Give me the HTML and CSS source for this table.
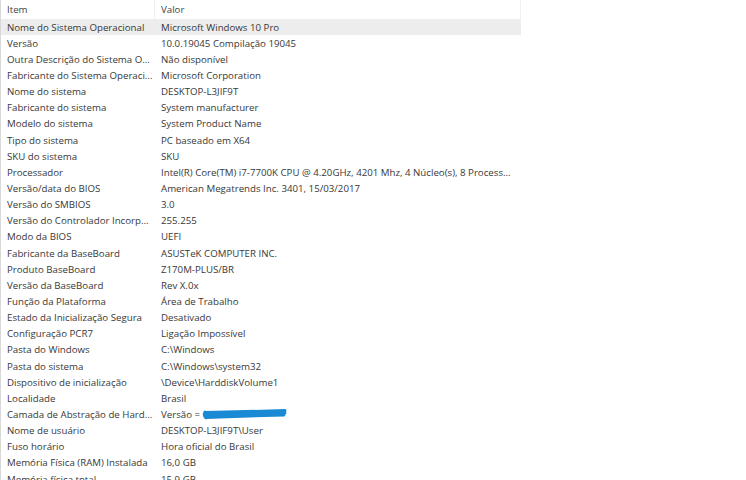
FILE: index.html
```html
<!DOCTYPE html>
<html lang="pt-BR">
<head>
<meta charset="utf-8">
<link rel="stylesheet" href="styles.css">
</head>
<body>
<div class="list">
  <div class="head">
    <div class="hcell">Item</div>
    <div class="hcell">Valor</div>
  </div>
  <div class="row sel"><span>Nome do Sistema Operacional</span><span>Microsoft Windows 10 Pro</span></div>
  <div class="row"><span>Versão</span><span>10.0.19045 Compilação 19045</span></div>
  <div class="row"><span>Outra Descrição do Sistema O...</span><span>Não disponível</span></div>
  <div class="row"><span>Fabricante do Sistema Operaci...</span><span>Microsoft Corporation</span></div>
  <div class="row"><span>Nome do sistema</span><span>DESKTOP-L3JIF9T</span></div>
  <div class="row"><span>Fabricante do sistema</span><span>System manufacturer</span></div>
  <div class="row"><span>Modelo do sistema</span><span>System Product Name</span></div>
  <div class="row"><span>Tipo do sistema</span><span>PC baseado em X64</span></div>
  <div class="row"><span>SKU do sistema</span><span>SKU</span></div>
  <div class="row"><span>Processador</span><span>Intel(R) Core(TM) i7-7700K CPU @ 4.20GHz, 4201 Mhz, 4 Núcleo(s), 8 Process...</span></div>
  <div class="row"><span>Versão/data do BIOS</span><span>American Megatrends Inc. 3401, 15/03/2017</span></div>
  <div class="row"><span>Versão do SMBIOS</span><span>3.0</span></div>
  <div class="row"><span>Versão do Controlador Incorp...</span><span>255.255</span></div>
  <div class="row"><span>Modo da BIOS</span><span>UEFI</span></div>
  <div class="row"><span>Fabricante da BaseBoard</span><span>ASUSTeK COMPUTER INC.</span></div>
  <div class="row"><span>Produto BaseBoard</span><span>Z170M-PLUS/BR</span></div>
  <div class="row"><span>Versão da BaseBoard</span><span>Rev X.0x</span></div>
  <div class="row"><span>Função da Plataforma</span><span>Área de Trabalho</span></div>
  <div class="row"><span>Estado da Inicialização Segura</span><span>Desativado</span></div>
  <div class="row"><span>Configuração PCR7</span><span>Ligação Impossível</span></div>
  <div class="row"><span>Pasta do Windows</span><span>C:\Windows</span></div>
  <div class="row"><span>Pasta do sistema</span><span>C:\Windows\system32</span></div>
  <div class="row"><span>Dispositivo de inicialização</span><span>\Device\HarddiskVolume1</span></div>
  <div class="row"><span>Localidade</span><span>Brasil</span></div>
  <div class="row"><span>Camada de Abstração de Hard...</span><span class="redact">Versão = <svg class="scribble" width="86" height="14" viewBox="0 0 86 14"><path d="M3 9 L83 6 M3 7 L83 4.5 M4 10.5 L82 8 M4 5.5 L83 3.5 M3 5 Q1 8 4 11" stroke="#1a8ad4" stroke-width="2.8" stroke-linecap="round" fill="none"/></svg></span></div>
  <div class="row"><span>Nome de usuário</span><span>DESKTOP-L3JIF9T\User</span></div>
  <div class="row"><span>Fuso horário</span><span>Hora oficial do Brasil</span></div>
  <div class="row"><span>Memória Física (RAM) Instalada</span><span>16,0 GB</span></div>
  <div class="row"><span>Memória física total</span><span>15,9 GB</span></div>
</div>
</body>
</html>
```
FILE: styles.css
```css
html, body {
  margin: 0;
  padding: 0;
  background: #fff;
  overflow: hidden;
  height: 480px;
}
body {
  font-family: "Open Sans", "Noto Sans", sans-serif;
  font-size: 9.7px;
  color: #383838;
}
.list {
  width: 746px;
  border-left: 1px solid #d8d8d8;
  box-sizing: border-box;
}
.head {
  display: grid;
  grid-template-columns: 154px 366px;
  height: 19px;
  align-items: center;
}
.hcell {
  padding-left: 6px;
  height: 19px;
  line-height: 19px;
  border-right: 1px solid #f0f0f0;
  color: #444;
}
.row {
  display: grid;
  grid-template-columns: 154px 366px;
  height: 16.15px;
  align-items: center;
}
.row span {
  padding-left: 6px;
  white-space: nowrap;
}
.row.sel {
  background: #ededed;
  width: 520px;
}
.redact {
  display: flex;
  align-items: center;
}
.scribble {
  margin-left: 2px;
}
```
